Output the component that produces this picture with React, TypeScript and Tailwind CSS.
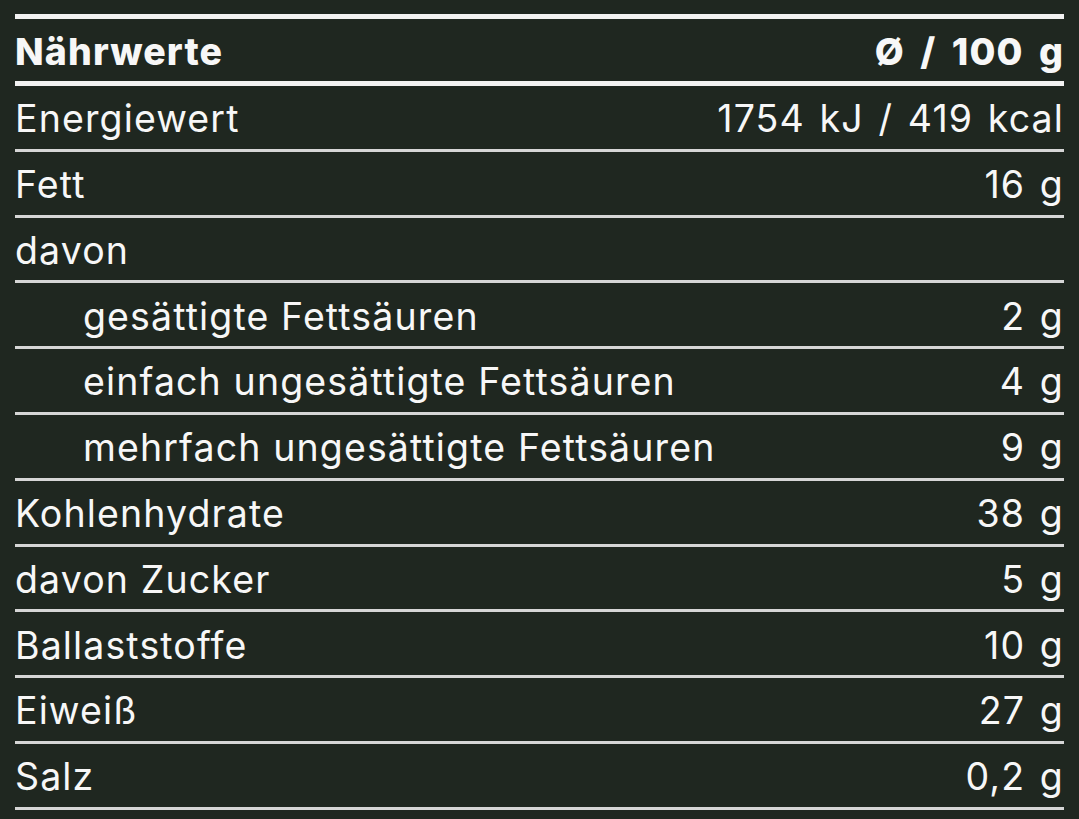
import React from 'react';

interface Row {
  label: string;
  value: string;
  indent?: boolean;
}

const rows: Row[] = [
  { label: 'Energiewert', value: '1754 kJ / 419 kcal' },
  { label: 'Fett', value: '16 g' },
  { label: 'davon', value: '' },
  { label: 'gesättigte Fettsäuren', value: '2 g', indent: true },
  { label: 'einfach ungesättigte Fettsäuren', value: '4 g', indent: true },
  { label: 'mehrfach ungesättigte Fettsäuren', value: '9 g', indent: true },
  { label: 'Kohlenhydrate', value: '38 g' },
  { label: 'davon Zucker', value: '5 g' },
  { label: 'Ballaststoffe', value: '10 g' },
  { label: 'Eiweiß', value: '27 g' },
  { label: 'Salz', value: '0,2 g' },
];

export default function App() {
  return (
    <div
      className="w-[1079px] h-[819px] bg-[#1f2720] px-[15px] pt-[14px] text-[#f7f7f7] text-[37.5px] tracking-[0.03em]"
      style={{ fontFamily: 'Inter, "Liberation Sans", sans-serif' }}
    >
      <div className="border-t-[5px] border-[#f2f2f2]">
        {/* header */}
        <div className="flex items-center justify-between h-[67px] pt-[4px] border-b-[5px] border-[#f2f2f2] font-extrabold">
          <span>Nährwerte</span>
          <span className="[word-spacing:6px]">Ø / 100 g</span>
        </div>

        {rows.map((row, index) => (
          <div
            key={index}
            className="flex items-center justify-between h-[65.8px] pt-[4px] border-b-[3px] border-[#d6d6d6]"
          >
            <span className={row.indent ? 'pl-[68px]' : ''}>{row.label}</span>
            <span className="whitespace-pre [word-spacing:3px]">{row.value}</span>
          </div>
        ))}
      </div>
    </div>
  );
}
